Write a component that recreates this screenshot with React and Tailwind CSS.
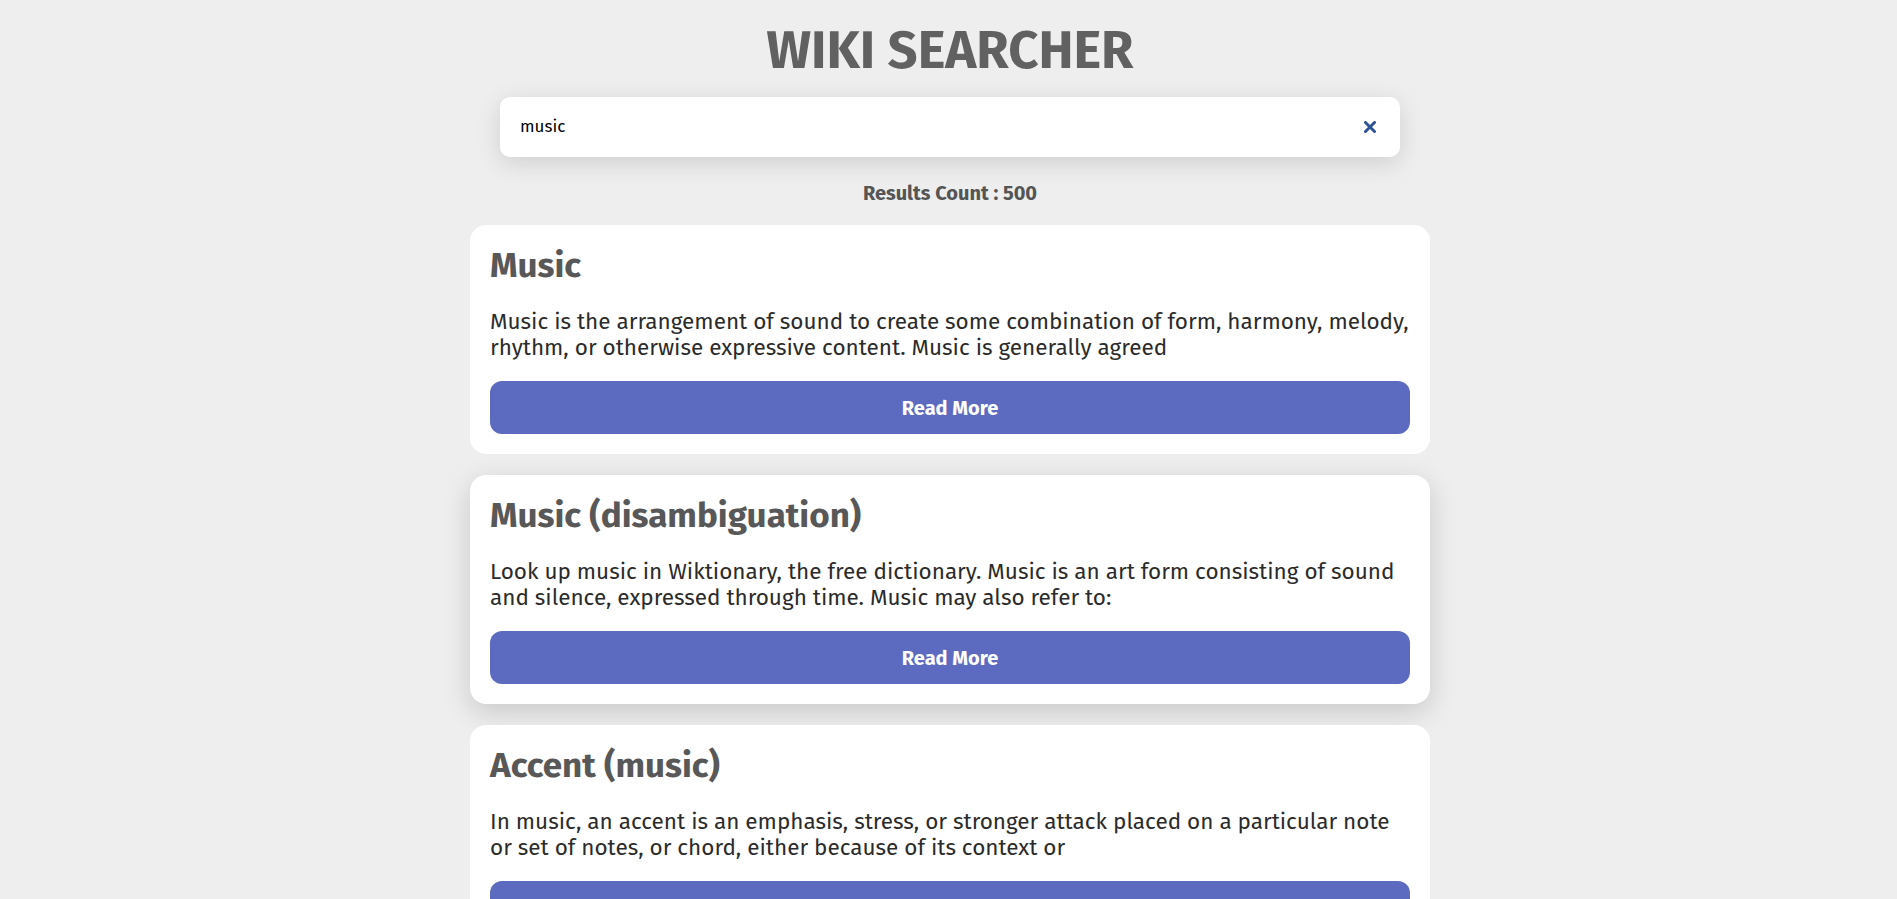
import React from "react";

const results = [
  {
    title: "Music",
    text: "Music is the arrangement of sound to create some combination of form, harmony, melody, rhythm, or otherwise expressive content. Music is generally agreed",
  },
  {
    title: "Music (disambiguation)",
    text: "Look up music in Wiktionary, the free dictionary. Music is an art form consisting of sound and silence, expressed through time. Music may also refer to:",
    hover: true,
  },
  {
    title: "Accent (music)",
    text: "In music, an accent is an emphasis, stress, or stronger attack placed on a particular note or set of notes, or chord, either because of its context or",
  },
];

function Card({ title, text, hover }) {
  return (
    <div
      className={
        "w-[960px] bg-white rounded-2xl p-5 flex flex-col " +
        (hover ? "shadow-[0_8px_28px_rgba(0,0,0,0.16)]" : "")
      }
    >
      <h2 className="text-[35px] leading-[40px] font-bold text-[#585858]">{title}</h2>
      <p className="mt-[24px] text-[22.5px] leading-[25.5px] text-[#2b2b2b]">{text}</p>
      <button className="mt-[21px] h-[53px] w-full rounded-xl bg-[#5c6bc0] text-white text-[20px] font-bold">
        Read More
      </button>
    </div>
  );
}

export default function App() {
  return (
    <div
      className="min-h-screen bg-[#eeeeee] flex flex-col items-center pt-[21px] pl-[3px] pb-10"
      style={{ fontFamily: "'Fira Sans', Lato, 'Noto Sans', sans-serif" }}
    >
      <h1 className="text-[52.6px] leading-[60px] font-bold text-[#616161]">WIKI SEARCHER</h1>
      <div className="mt-[16px] w-[900px] h-[60px] bg-white rounded-[10px] shadow-[0_6px_24px_rgba(0,0,0,0.13)] flex items-center pl-5 pr-6">
        <input
          className="flex-1 outline-none bg-transparent text-[17px] text-black"
          defaultValue="music"
          style={{ fontFamily: "'Fira Sans', Lato, sans-serif" }}
        />
        <svg width="12" height="12" viewBox="0 0 12 12" className="shrink-0">
          <path d="M1.5 1.5 L10.5 10.5 M10.5 1.5 L1.5 10.5" stroke="#2f5597" strokeWidth="3" strokeLinecap="round" />
        </svg>
      </div>
      <div className="mt-[24px] text-[20px] leading-[24px] font-bold text-[#555555]">Results Count : 500</div>
      <div className="mt-[20px] flex flex-col gap-[21px]">
        {results.map((r) => (
          <Card key={r.title} {...r} />
        ))}
      </div>
    </div>
  );
}
